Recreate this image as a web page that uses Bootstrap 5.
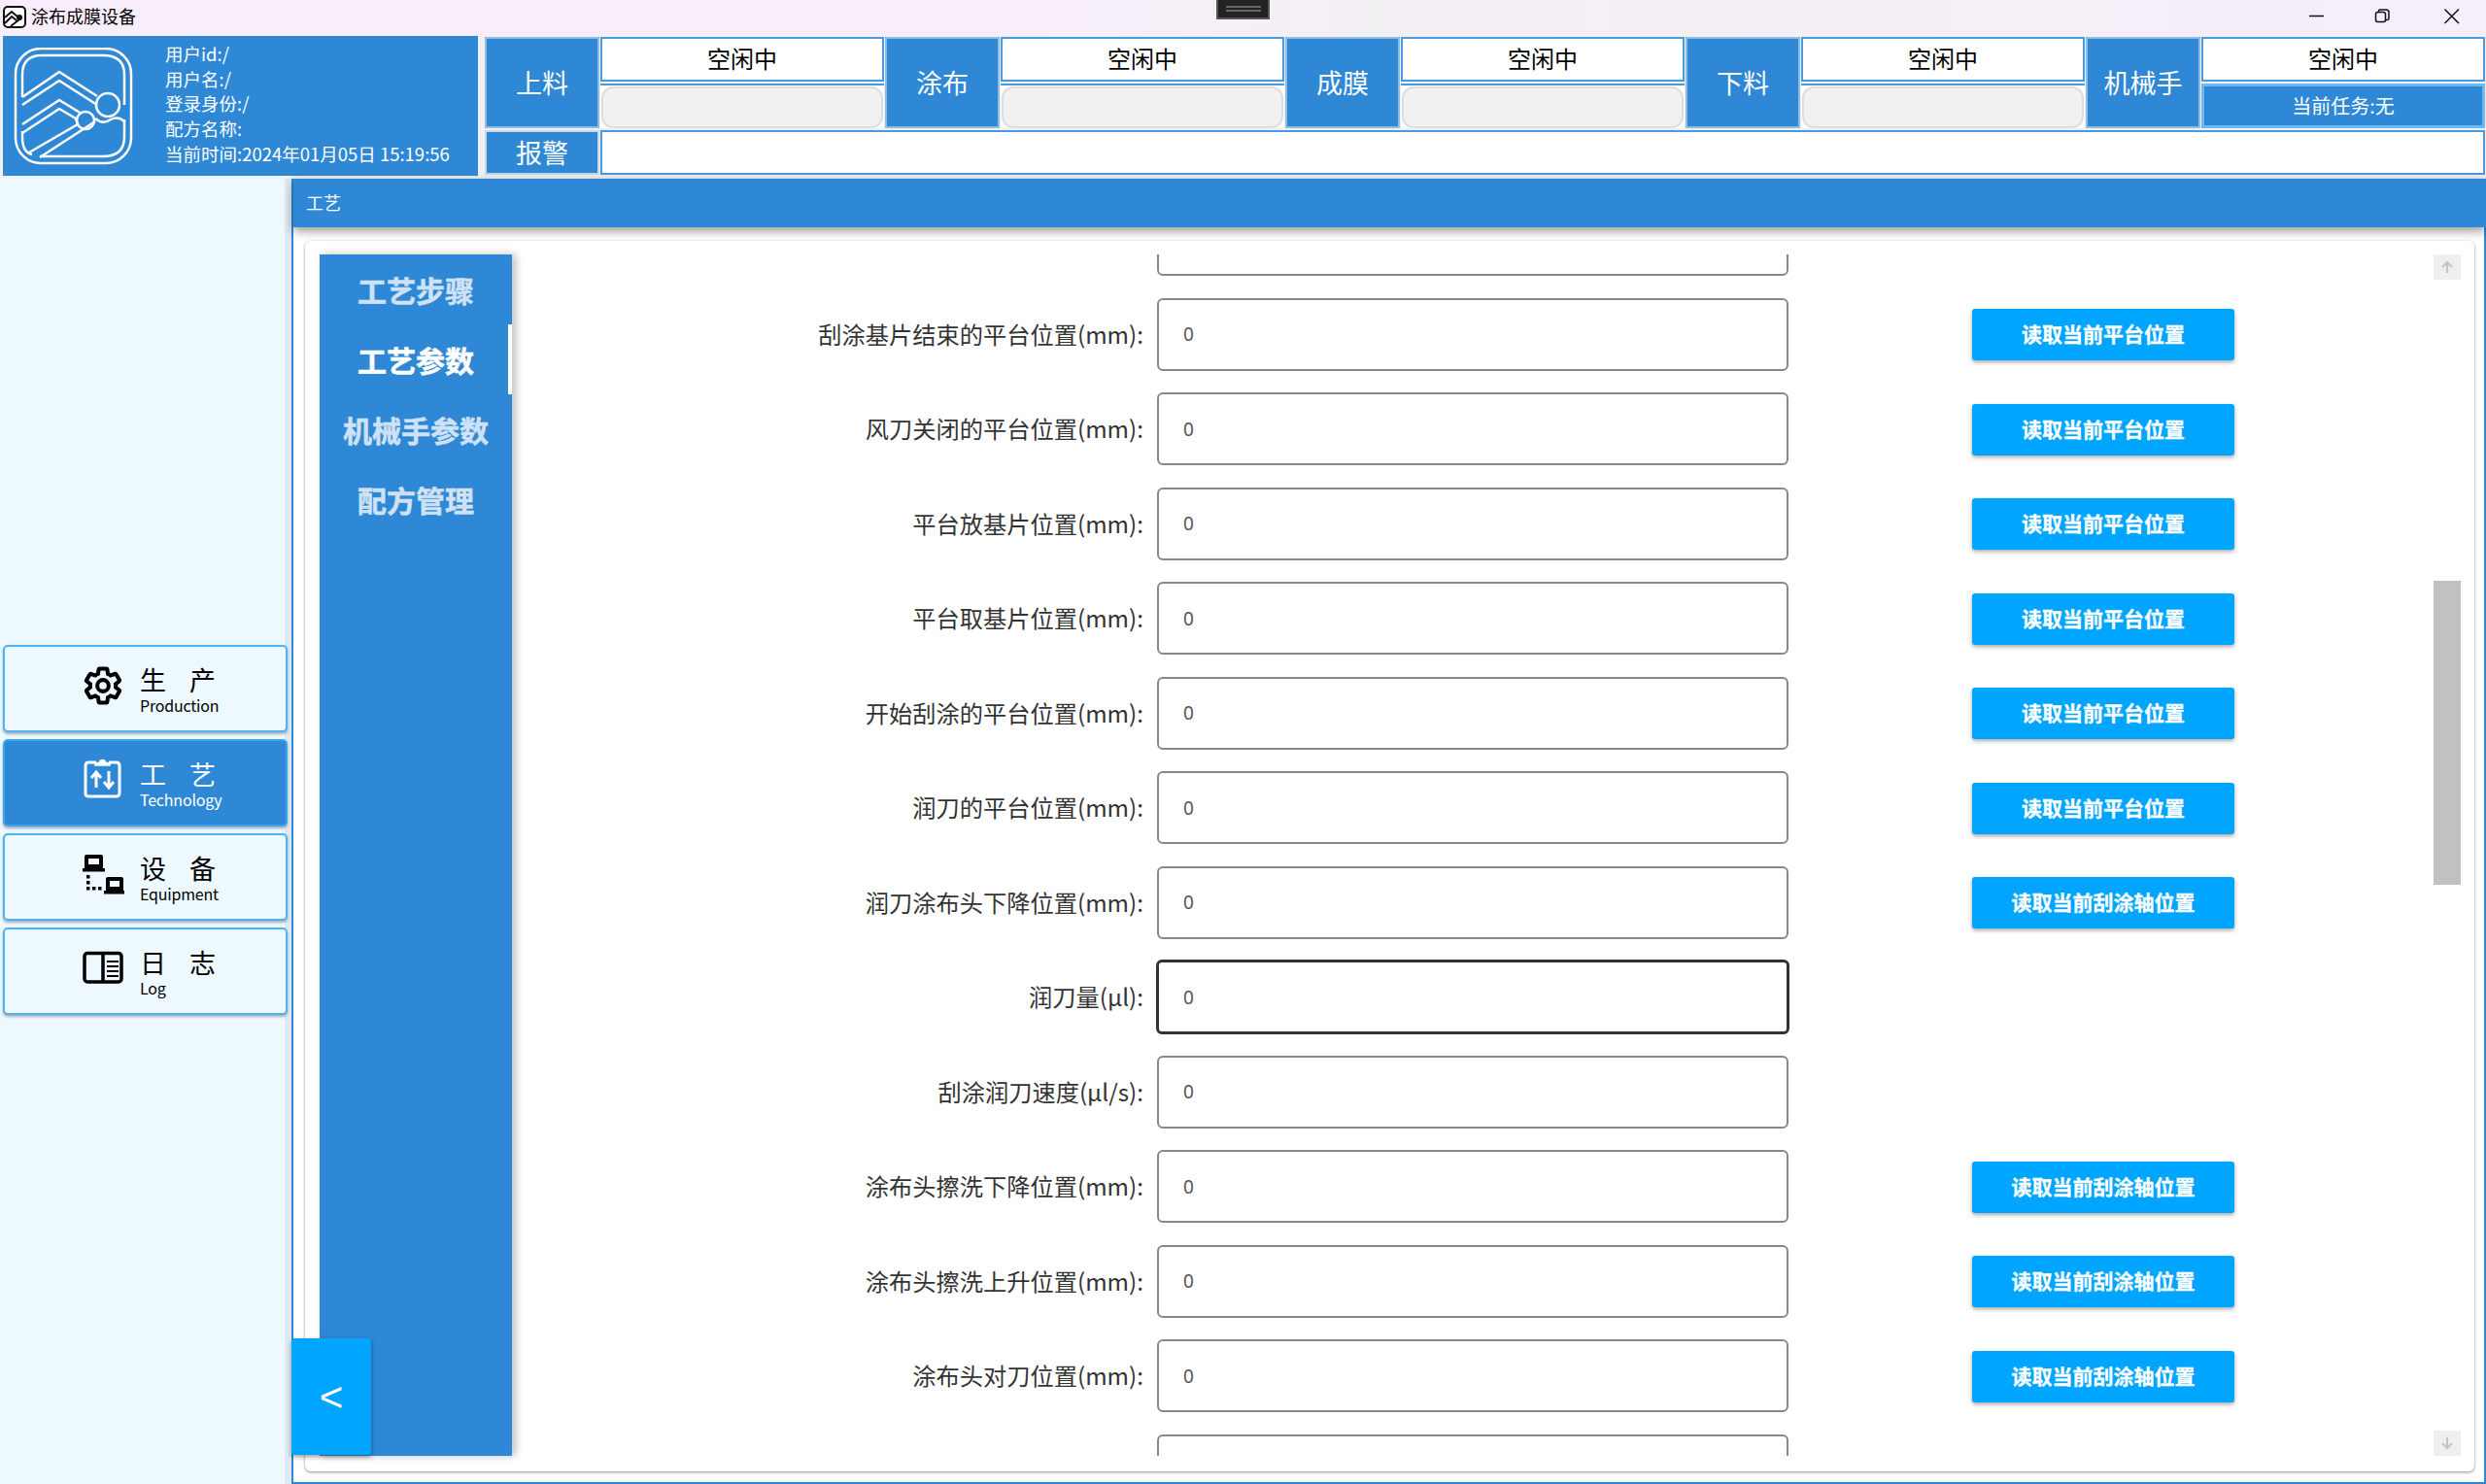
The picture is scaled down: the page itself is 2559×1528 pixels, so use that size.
<!DOCTYPE html>
<html lang="zh-CN">
<head>
<meta charset="utf-8">
<title>涂布成膜设备</title>
<link rel="stylesheet" href="https://cdn.jsdelivr.net/npm/bootstrap@5.3.0/dist/css/bootstrap.min.css">
<style>
html,body{height:100%;margin:0;overflow:hidden}
body{font-family:"Noto Sans CJK SC","Noto Sans",sans-serif;background:#f1f1f1;color:#000;display:flex;flex-direction:column;width:2559px;height:1528px}
.winbar{height:37px;flex:none;background:linear-gradient(90deg,#f8eefb 0,#f8eefb 40%,#f3f0f4 55%,#f6eefa 100%);position:relative}
.wintitle{font-size:18px;margin-left:3px;gap:5px;line-height:33px}
.winhandle{position:absolute;left:1252px;top:0;width:55px;height:20px;background:#222;border:2px solid #555;border-top:0;display:flex;align-items:center;justify-content:center}
.winhandle i{display:block;width:36px;height:6px;border-top:2px solid #666;border-bottom:2px solid #666}
.winctl{position:absolute;top:8px;left:0;}
.topzone{height:147px;flex:none;padding:0 2px 0 3px}
.brand{width:489px;height:144px;background:#2f88d5;color:#fff;flex:none}
.brandlogo{margin:12px 0 0 11px;flex:none}
.brandinfo{margin:6px 0 0 32px;font-size:18.5px;line-height:25.7px;white-space:nowrap;}
.statusgrid{margin-left:7px;margin-top:1px;display:grid;grid-template-columns:repeat(5,118px 292px);grid-template-rows:46px 46px 46px;gap:2px;width:2058px;height:142px;column-gap:1px}
.slabel{grid-row:span 2;background:#2f88d5;border:2px solid #8fbde6;color:#fff;font-size:27px;display:flex;align-items:center;justify-content:center}
.slabel.alarmlabel{grid-row:auto;border-color:#c5d9ea}
.scell{background:#fff;border:2px solid #4a9ae0;font-size:24px;display:flex;align-items:center;justify-content:center;padding-bottom:2px}
.sbox{background:#fff;border-top:2px solid #4a9ae0;padding:1px 1px 0}
.sbox>div{height:100%;background:#f1f1f1;border:2px solid #dedede;border-radius:12px}
.staskbox{background:#2f88d5;border:3px solid #6cb9f3;color:#fff;font-size:20px;display:flex;align-items:center;justify-content:center}
.alarmcell{grid-column:2/-1;background:#fff;border:2px solid #4a9ae0}
.lowerzone{flex:1;min-height:0}
.sidezone{width:300px;flex:none;background:linear-gradient(90deg,#edf8ff 293px,#dfe9f3 293px);padding:480px 4px 0 3px;gap:7px}
.sidebtn{height:90px;background:#edf8ff;border:2px solid #4db3f5;border-radius:5px;box-shadow:0 2px 3px rgba(0,0,0,.3);color:#000;display:flex;align-items:center;padding:0 0 0 79px}
.sidebtn.on{background:#2f88d5;color:#fff;border-color:#39a6f2}
.sideicon{width:44px;height:44px;flex:none;margin-right:16px;margin-bottom:6px}
.sideicon.higher{margin-bottom:10px}
.sidetext{padding-top:4px}
.sidecn{font-size:27px;line-height:30px;display:flex;gap:24px}
.sideen{font-size:16px;line-height:22px;letter-spacing:-.2px}
.mainzone{flex:1;min-width:0;background:#fff;border:2px solid #2f88d5;border-top:0;position:relative;display:flex;flex-direction:column}
.mainhead{height:50px;flex:none;background:#2f88d5;color:#fff;font-size:18px;line-height:48px;padding-left:13px;box-shadow:0 4px 10px rgba(0,0,0,.4);position:relative;z-index:1;margin:0 -2px 0 0}
.paper{flex:1;min-height:0;margin:14px 10px 11px 12px;padding:14px 14px 16px 15px;background:#fff;border-radius:6px;box-shadow:0 1px 3px rgba(0,0,0,.45);display:flex}
.tabrail{width:198px;flex:none;background:#2f88d5;box-shadow:4px 0 8px rgba(0,0,0,.25);position:relative;z-index:1}
.tabitem{height:72px;display:flex;align-items:center;justify-content:center;color:#cfe2f5;font-size:30px;font-weight:700;-webkit-text-stroke:.5px currentColor;border-right:4px solid transparent;padding-left:4px}
.tabitem.on{color:#fff;border-right-color:#fff}
.formview{flex:1;min-width:0;overflow:hidden}
.forminner{margin-top:-64.25px}
.frow{height:97.5px}
.flabel{width:650px;flex:none;text-align:right;font-size:24.25px;color:#333;margin:0 14px 0 0;white-space:nowrap}
.finput.form-control{width:650px;height:75px;flex:none;border:2px solid #888;border-radius:6px;padding:0 25px;font-size:19px;color:#555;font-family:"Noto Sans",sans-serif;box-shadow:none}
.finput.form-control.live{border:3px solid #333;width:652px;height:77px;margin:0 -1px}
.readbtn.btn{width:270px;height:53px;margin-left:189px;flex:none;background:#00a5ff;border:0;border-radius:3px;color:#fff;font-size:21px;font-weight:700;-webkit-text-stroke:.3px #fff;box-shadow:0 2px 4px rgba(0,0,0,.35);padding:0 0 1px;margin-top:1px}
.fakebar{width:28px;flex:none;display:flex;flex-direction:column;align-items:stretch}
.barcap{height:26px;background:#efefef;display:flex;align-items:center;justify-content:center;flex:none}
.barthumb{height:313px;background:#c1c1c1;margin-top:310px;flex:none}
.barcap.down{margin-top:auto}
.foldbtn{position:absolute;left:-2px;bottom:28px;width:82px;height:120px;background:#00a5ff;border-radius:3px;box-shadow:0 2px 5px rgba(0,0,0,.4);color:#fff;font-size:42px;font-weight:300;display:flex;align-items:center;justify-content:center;z-index:2;font-family:"Liberation Sans",sans-serif}
</style>
</head>
<body>
<div class="winbar">
  <div class="wintitle d-flex align-items-center">
    <svg width="24" height="24" viewBox="0 0 24 24" fill="#fff" stroke="#111" stroke-width="2"><rect x="1" y="2" width="22" height="21" rx="4"/><path fill="none" d="M2 13 9 7l7 6M2 19 9 12l5 4M8 22l9-7 2-1"/><circle cx="17" cy="13" r="2" fill="#111"/></svg>
    <span>涂布成膜设备</span>
  </div>
  <div class="winhandle"><i></i></div>
  <svg class="winctl" width="2559" height="24" viewBox="0 0 2559 24" fill="none" stroke="#111" stroke-width="1.5">
    <path d="M2377 8.500h15"/>
    <rect x="2445.500" y="4.500" width="10" height="10" rx="2"/>
    <path d="M2448.500 4.500v-1a1.500 1.500 0 0 1 1.500-1.500h6a3 3 0 0 1 3 3v6a1.500 1.500 0 0 1-1.500 1.500h-2"/>
    <path d="M2516.500 1.500l14.500 14.500M2531 1.500l-14.500 14.500"/>
  </svg>
</div>
<div class="topzone d-flex">
  <div class="brand d-flex">
    <svg class="brandlogo" width="124" height="122" viewBox="0 0 124 122" fill="none" stroke="#fff" stroke-width="2.500" stroke-linejoin="round">
      <rect x="2" y="1" width="119" height="118" rx="26"/>
      <path d="M9 51V28Q9 8 29 8H92Q114 8 114 28V59"/>
      <path d="M114 74V92Q114 112 92 112H27M9 86V92Q9 108 19 110"/>
      <path d="M9 51 47 25 86 50M9 59 47 34 86 59"/>
      <path d="M9 79 47 54 70 68M9 88 47 63 64 73 66 79 16 108"/>
      <path d="M27 113 84 76"/>
      <circle cx="97" cy="59" r="12"/>
      <circle cx="74" cy="75" r="9"/>
      <path d="M84 73Q92 80 100 74 108 70 114 76"/>
    </svg>
    <div class="brandinfo">
      <div>用户id:/</div>
      <div>用户名:/</div>
      <div>登录身份:/</div>
      <div>配方名称:</div>
      <div>当前时间:2024年01月05日 15:19:56</div>
    </div>
  </div>
  <div class="statusgrid">
    <div class="slabel">上料</div><div class="scell">空闲中</div>
    <div class="slabel">涂布</div><div class="scell">空闲中</div>
    <div class="slabel">成膜</div><div class="scell">空闲中</div>
    <div class="slabel">下料</div><div class="scell">空闲中</div>
    <div class="slabel">机械手</div><div class="scell">空闲中</div>
    <div class="sbox"><div></div></div>
    <div class="sbox"><div></div></div>
    <div class="sbox"><div></div></div>
    <div class="sbox"><div></div></div>
    <div class="staskbox">当前任务:无</div>
    <div class="slabel alarmlabel">报警</div>
    <div class="alarmcell"></div>
  </div>
</div>
<div class="lowerzone d-flex">
  <div class="sidezone d-flex flex-column">
    <div class="sidebtn">
      <svg class="sideicon" viewBox="0 0 24 24" fill="none" stroke="currentColor" stroke-width="2.200"><path d="M19.14 12.94c.04-.3.06-.61.06-.94 0-.32-.02-.64-.07-.94l2.030-1.580c.18-.14.23-.41.12-.61l-1.920-3.320c-.12-.22-.37-.29-.59-.22l-2.390.96c-.5-.38-1.030-.7-1.620-.94l-.36-2.540c-.04-.24-.24-.41-.48-.41h-3.840c-.24 0-.43.17-.47.41l-.36 2.540c-.59.24-1.130.57-1.620.94l-2.390-.96c-.22-.08-.47 0-.59.22L2.740 8.870c-.12.21-.08.47.12.61l2.030 1.580c-.05.3-.09.63-.09.94s.02.64.07.94l-2.030 1.580c-.18.14-.23.41-.12.61l1.920 3.320c.12.22.37.29.59.22l2.390-.96c.5.38 1.030.7 1.620.94l.36 2.540c.05.24.24.41.48.41h3.840c.24 0 .44-.17.47-.41l.36-2.540c.59-.24 1.130-.56 1.620-.94l2.390.96c.22.08.47 0 .59-.22l1.920-3.320c.12-.22.07-.47-.12-.61l-2.010-1.580z"/><circle cx="12" cy="12" r="3.200"/></svg>
      <div class="sidetext"><div class="sidecn"><span>生</span><span>产</span></div><div class="sideen">Production</div></div>
    </div>
    <div class="sidebtn on">
      <svg class="sideicon higher" viewBox="0 0 44 44" fill="none" stroke="currentColor" stroke-width="3"><path d="M15 6H7.500Q4 6 4 9.500v29Q4 41 7.500 41h28q3.500 0 3.500-3.500v-28Q39 6 35.500 6H28"/><path d="M14 9h15V6.500h-4.500a3 3 0 0 0-6 0H14z" fill="currentColor" stroke-width="1.500"/><path d="M15 32V17M10 22l5-6 5 6M28 15v16M23 26l5 6 5-6" stroke-width="3"/></svg>
      <div class="sidetext"><div class="sidecn"><span>工</span><span>艺</span></div><div class="sideen">Technology</div></div>
    </div>
    <div class="sidebtn">
      <svg class="sideicon" viewBox="0 0 44 44" fill="currentColor"><path fill-rule="evenodd" d="M5 2h15a2 2 0 0 1 2 2v12H3V4a2 2 0 0 1 2-2zm2 4v6h11V6z"/><rect x="1" y="16" width="23" height="3.500"/><path fill-rule="evenodd" d="M27 25h14a2 2 0 0 1 2 2v12H25V27a2 2 0 0 1 2-2zm2 4v6h10v-6z"/><rect x="23" y="39" width="21" height="3.500"/><rect x="5" y="23" width="3.500" height="3.500"/><rect x="5" y="29" width="3.500" height="3.500"/><rect x="5" y="35" width="3.500" height="3.500"/><rect x="11" y="35" width="3.500" height="3.500"/><rect x="17" y="35" width="3.500" height="3.500"/></svg>
      <div class="sidetext"><div class="sidecn"><span>设</span><span>备</span></div><div class="sideen">Equipment</div></div>
    </div>
    <div class="sidebtn">
      <svg class="sideicon" viewBox="0 0 44 44" fill="none" stroke="currentColor" stroke-width="3.500"><rect x="3" y="6.500" width="38" height="29.500" rx="3"/><path d="M22 6.500v29.500"/><path d="M26 15h12M26 20h12M26 25h12M26 30h12" stroke-width="2"/></svg>
      <div class="sidetext"><div class="sidecn"><span>日</span><span>志</span></div><div class="sideen">Log</div></div>
    </div>
  </div>
  <div class="mainzone">
    <div class="mainhead">工艺</div>
    <div class="paper">
      <div class="tabrail">
        <div class="tabitem">工艺步骤</div>
        <div class="tabitem on">工艺参数</div>
        <div class="tabitem">机械手参数</div>
        <div class="tabitem">配方管理</div>
      </div>
      <div class="formview">
        <div class="forminner">
          <div class="frow d-flex align-items-center"><label class="flabel"></label><input class="finput form-control" value="0"></div>
          <div class="frow d-flex align-items-center"><label class="flabel">刮涂基片结束的平台位置(mm):</label><input class="finput form-control" value="0"><button class="readbtn btn">读取当前平台位置</button></div>
          <div class="frow d-flex align-items-center"><label class="flabel">风刀关闭的平台位置(mm):</label><input class="finput form-control" value="0"><button class="readbtn btn">读取当前平台位置</button></div>
          <div class="frow d-flex align-items-center"><label class="flabel">平台放基片位置(mm):</label><input class="finput form-control" value="0"><button class="readbtn btn">读取当前平台位置</button></div>
          <div class="frow d-flex align-items-center"><label class="flabel">平台取基片位置(mm):</label><input class="finput form-control" value="0"><button class="readbtn btn">读取当前平台位置</button></div>
          <div class="frow d-flex align-items-center"><label class="flabel">开始刮涂的平台位置(mm):</label><input class="finput form-control" value="0"><button class="readbtn btn">读取当前平台位置</button></div>
          <div class="frow d-flex align-items-center"><label class="flabel">润刀的平台位置(mm):</label><input class="finput form-control" value="0"><button class="readbtn btn">读取当前平台位置</button></div>
          <div class="frow d-flex align-items-center"><label class="flabel">润刀涂布头下降位置(mm):</label><input class="finput form-control" value="0"><button class="readbtn btn">读取当前刮涂轴位置</button></div>
          <div class="frow d-flex align-items-center"><label class="flabel">润刀量(μl):</label><input class="finput form-control live" value="0"></div>
          <div class="frow d-flex align-items-center"><label class="flabel">刮涂润刀速度(μl/s):</label><input class="finput form-control" value="0"></div>
          <div class="frow d-flex align-items-center"><label class="flabel">涂布头擦洗下降位置(mm):</label><input class="finput form-control" value="0"><button class="readbtn btn">读取当前刮涂轴位置</button></div>
          <div class="frow d-flex align-items-center"><label class="flabel">涂布头擦洗上升位置(mm):</label><input class="finput form-control" value="0"><button class="readbtn btn">读取当前刮涂轴位置</button></div>
          <div class="frow d-flex align-items-center"><label class="flabel">涂布头对刀位置(mm):</label><input class="finput form-control" value="0"><button class="readbtn btn">读取当前刮涂轴位置</button></div>
          <div class="frow d-flex align-items-center"><label class="flabel"></label><input class="finput form-control" value="0"></div>
        </div>
      </div>
      <div class="fakebar">
        <div class="barcap"><svg width="14" height="14" viewBox="0 0 14 14" fill="none" stroke="#c4c4c4" stroke-width="2"><path d="M7 13V2M2 7l5-5 5 5"/></svg></div>
        <div class="barthumb"></div>
        <div class="barcap down"><svg width="14" height="14" viewBox="0 0 14 14" fill="none" stroke="#c4c4c4" stroke-width="2"><path d="M7 1v11M2 7l5 5 5-5"/></svg></div>
      </div>
    </div>
    <div class="foldbtn">&lt;</div>
  </div>
</div>
<script src="https://cdn.jsdelivr.net/npm/bootstrap@5.3.0/dist/js/bootstrap.bundle.min.js"></script>
</body>
</html>
